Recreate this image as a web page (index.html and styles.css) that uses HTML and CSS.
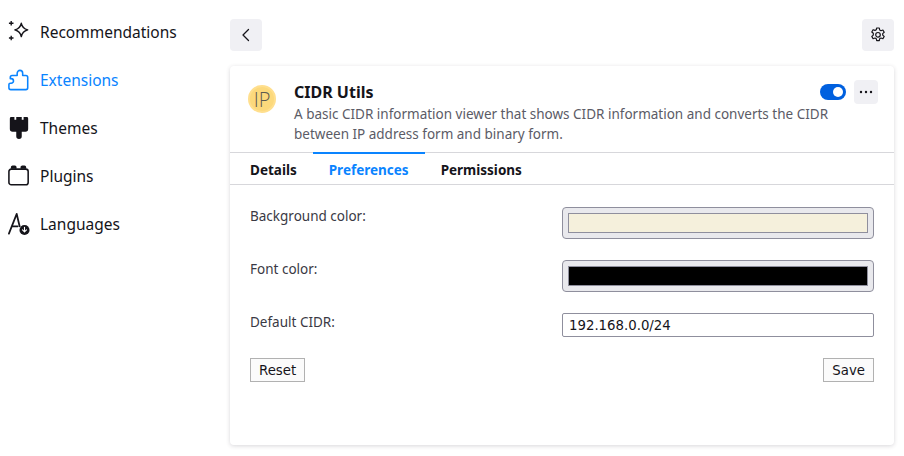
FILE: index.html
```html
<!DOCTYPE html>
<html lang="en">
<head>
  <meta charset="UTF-8">
  <meta name="viewport" content="width=device-width, initial-scale=1.0">
  <title>CIDR Utils</title>
  <link rel="stylesheet" href="styles.css">
</head>
<body>
  <div class="page">

    <!-- Categories -->
    <nav class="sidebar">
      <a class="nav-item">
        <svg class="nav-icon" viewBox="0 0 24 24" fill="none" stroke="currentColor" stroke-width="1.6" stroke-linejoin="round">
          <path d="M14.5 2.5c.8 3.9 2.6 6 7 7.2-4.4 1.2-6.200 3.300-7 7.300-.8-4-2.600-6.100-7-7.300 4.400-1.200 6.200-3.300 7-7.200z"/>
          <path d="M3.500 0v5M1 2.500h5M3.500 16v5M1 18.500h5" stroke-width="1.500"/>
        </svg>
        <span>Recommendations</span>
      </a>
      <a class="nav-item active">
        <svg class="nav-icon" viewBox="0 0 24 24" fill="none" stroke="currentColor" stroke-width="1.700" stroke-linejoin="round">
          <path d="M3 22.500a2 2 0 0 1-2-2V17c0-.8.7-1.500 1.500-1.500h1a2.500 2.500 0 0 0 0-5H2.500V9c0-1.300 1-2 2-2H10V4.500a3 3 0 0 1 3-3 3 3 0 0 1 3 3V7h3.500c1.200 0 2 .9 2 2v11.500a2 2 0 0 1-2 2z"/>
        </svg>
        <span>Extensions</span>
      </a>
      <a class="nav-item">
        <svg class="nav-icon" viewBox="0 0 24 24" fill="currentColor">
          <path d="M3.500 0H7v3h2V0h6v3h2V0h3.500A1.500 1.500 0 0 1 22 1.500V13a3 3 0 0 1-3 3h-4v5a3 3 0 0 1-6 0v-5H5a3 3 0 0 1-3-3V1.500A1.500 1.500 0 0 1 3.500 0z"/>
        </svg>
        <span>Themes</span>
      </a>
      <a class="nav-item">
        <svg class="nav-icon" viewBox="0 0 24 24" fill="none" stroke="currentColor" stroke-width="1.700">
          <rect x="1" y="4.500" width="21" height="17" rx="2.500"/>
          <path d="M4 4V2.500a1 1 0 0 1 1-1h2.500a1 1 0 0 1 1 1V4M14.500 4V2.500a1 1 0 0 1 1-1H18a1 1 0 0 1 1 1V4" fill="currentColor"/>
        </svg>
        <span>Plugins</span>
      </a>
      <a class="nav-item">
        <svg class="nav-icon" viewBox="0 0 24 24" fill="none" stroke="currentColor" stroke-width="1.900" stroke-linecap="round" stroke-linejoin="round">
          <path d="M1 22.500 9.500 1c.8 3.500 1.800 8 3.200 13.500M4.500 14.500h6"/>
          <circle cx="18" cy="18.500" r="5.500" fill="currentColor" stroke="none"/>
          <path d="M18 15.500v5M15.800 18.500l2.200 2.200 2.200-2.200" stroke="#fff" stroke-width="1.200"/>
        </svg>
        <span>Languages</span>
      </a>
    </nav>

    <main class="main">
      <div class="topbar">
        <button class="icon-btn">
          <svg viewBox="0 0 16 16" width="16" height="16" fill="none" stroke="#15141a" stroke-width="1.300" stroke-linecap="round" stroke-linejoin="round">
            <path d="M10.500 2.500 5 8l5.500 5.500"/>
          </svg>
        </button>
        <button class="icon-btn">
          <svg viewBox="0 0 16 16" width="16" height="16" fill="none" stroke="#15141a" stroke-width="1.200" stroke-linejoin="round">
            <path d="M6.700 1h2.600l.4 2 1.300.7 1.900-.7 1.300 2.300-1.500 1.300v1.500l1.500 1.300-1.300 2.300-1.900-.7-1.300.7-.4 2H6.700l-.4-2-1.300-.7-1.900.7-1.300-2.300 1.500-1.300V6.300L1.800 5l1.300-2.300 1.900.7 1.300-.7z"/>
            <circle cx="8" cy="7.800" r="2.300"/>
          </svg>
        </button>
      </div>

      <section class="card">
        <header class="addon-head">
          <div class="addon-logo"><span>IP</span></div>
          <div class="addon-info">
            <div class="addon-title-row">
              <h1 class="addon-name">CIDR Utils</h1>
              <div class="addon-actions">
                <span class="toggle"></span>
                <button class="more-btn">
                  <svg viewBox="0 0 16 16" width="16" height="16" fill="#15141a">
                    <circle cx="3" cy="8" r="1.200"/><circle cx="8" cy="8" r="1.200"/><circle cx="13" cy="8" r="1.200"/>
                  </svg>
                </button>
              </div>
            </div>
            <p class="addon-desc">A basic CIDR information viewer that shows CIDR information and converts the CIDR between IP address form and binary form.</p>
          </div>
        </header>

        <div class="tabs">
          <a class="tab">Details</a>
          <a class="tab current">Preferences</a>
          <a class="tab">Permissions</a>
        </div>

        <form class="prefs">
          <div class="pref-row">
            <label>Background color:</label>
            <input class="color-field" type="color" value="#f5f0dc">
          </div>
          <div class="pref-row">
            <label>Font color:</label>
            <input class="color-field" type="color" value="#000000">
          </div>
          <div class="pref-row">
            <label>Default CIDR:</label>
            <input class="text-field" type="text" value="192.168.0.0/24">
          </div>
          <div class="pref-buttons">
            <button type="button" class="plain-btn">Reset</button>
            <button type="button" class="plain-btn">Save</button>
          </div>
        </form>
      </section>
    </main>

  </div>
</body>
</html>
```

FILE: styles.css
```css
html, body {
  margin: 0;
  padding: 0;
  height: 100%;
  overflow: hidden;
  background: #fff;
  color: #15141a;
  font-family: "Noto Sans", sans-serif;
}

.page {
  display: flex;
  height: 456px;
}

/* Sidebar */
.sidebar {
  width: 230px;
  flex: none;
  padding-top: 8px;
  box-sizing: border-box;
}
.nav-item {
  display: flex;
  align-items: center;
  gap: 10px;
  height: 48px;
  padding-left: 8px;
  font-size: 15.500px;
  color: #15141a;
}
.nav-item.active {
  color: #0a84ff;
}
.nav-icon {
  width: 22px;
  height: 24px;
  flex: none;
}

/* Main column */
.main {
  width: 664px;
  flex: none;
  padding-top: 19px;
}
.topbar {
  display: flex;
  justify-content: space-between;
  margin-bottom: 15px;
}
.icon-btn {
  width: 32px;
  height: 32px;
  padding: 0;
  border: none;
  border-radius: 4px;
  background: #f0f0f4;
  display: flex;
  align-items: center;
  justify-content: center;
}

.card {
  height: 379px;
  box-sizing: border-box;
  border-radius: 4px;
  background: #fff;
  box-shadow: 0 1px 4px rgba(58, 57, 68, 0.2);
}

/* Add-on header */
.addon-head {
  display: flex;
  height: 86px;
  box-sizing: border-box;
  padding: 14px 16px 0 18px;
}
.addon-logo {
  width: 28px;
  height: 28px;
  margin: 5px 18px 0 0;
  flex: none;
  box-sizing: border-box;
  border: 2px solid #ffdf8e;
  border-radius: 50%;
  background: #fcd97c;
  display: flex;
  align-items: center;
  justify-content: center;
}
.addon-logo span {
  font: 300 20px "Open Sans", sans-serif;
  color: #5c5a50;
}
.addon-info {
  flex: 1;
}
.addon-title-row {
  display: flex;
  justify-content: space-between;
  align-items: center;
  height: 24px;
}
.addon-name {
  margin: 0;
  font-size: 16px;
  font-weight: 700;
}
.addon-actions {
  display: flex;
  align-items: center;
  gap: 8px;
}
.toggle {
  position: relative;
  width: 26px;
  height: 16px;
  border-radius: 8px;
  background: #0060df;
}
.toggle::after {
  content: "";
  position: absolute;
  top: 3px;
  right: 3px;
  width: 10px;
  height: 10px;
  border-radius: 50%;
  background: #fff;
}
.more-btn {
  width: 24px;
  height: 24px;
  padding: 0;
  border: none;
  border-radius: 4px;
  background: #f0f0f4;
  display: flex;
  align-items: center;
  justify-content: center;
}
.addon-desc {
  margin: 0;
  width: 540px;
  font-size: 13.500px;
  line-height: 20px;
  color: #5b5b66;
}

/* Tabs */
.tabs {
  display: flex;
  height: 33px;
  box-sizing: border-box;
  padding-left: 4px;
  border-top: 1px solid #d7d7db;
  border-bottom: 1px solid #d7d7db;
}
.tab {
  padding: 0 16px;
  margin-top: -1px;
  font-size: 13.500px;
  font-weight: 700;
  line-height: 33px;
  border-top: 2px solid transparent;
  box-sizing: border-box;
  height: 33px;
}
.tab.current {
  color: #0a84ff;
  border-top-color: #0a84ff;
}

/* Preferences form */
.prefs {
  padding: 22px 20px 0;
}
.pref-row {
  display: flex;
  justify-content: space-between;
  align-items: flex-start;
  margin-bottom: 21px;
}
.pref-row label {
  font-size: 13.500px;
  line-height: 20px;
  margin-top: -1px;
  color: #3a3944;
}
.color-field {
  width: 312px;
  height: 32px;
  padding: 5px;
  box-sizing: border-box;
  border: 1px solid #8f8f9d;
  border-radius: 4px;
  background: #e9e9ed;
  appearance: none;
}
.color-field::-webkit-color-swatch-wrapper {
  padding: 0;
}
.color-field::-webkit-color-swatch {
  border: 1px solid #8f8f9d;
  border-radius: 0;
}
.text-field {
  width: 312px;
  height: 24px;
  padding: 0 6px;
  box-sizing: border-box;
  border: 1px solid #8f8f9d;
  border-radius: 2px;
  font-family: "DejaVu Sans", sans-serif;
  font-size: 13.300px;
  color: #15141a;
}
.pref-buttons {
  display: flex;
  justify-content: space-between;
}
.plain-btn {
  height: 24px;
  padding: 0 8px;
  border: 1px solid #b1b1b1;
  background: #fbfbfb;
  font-family: "DejaVu Sans", sans-serif;
  font-size: 13.300px;
  color: #15141a;
}
```
